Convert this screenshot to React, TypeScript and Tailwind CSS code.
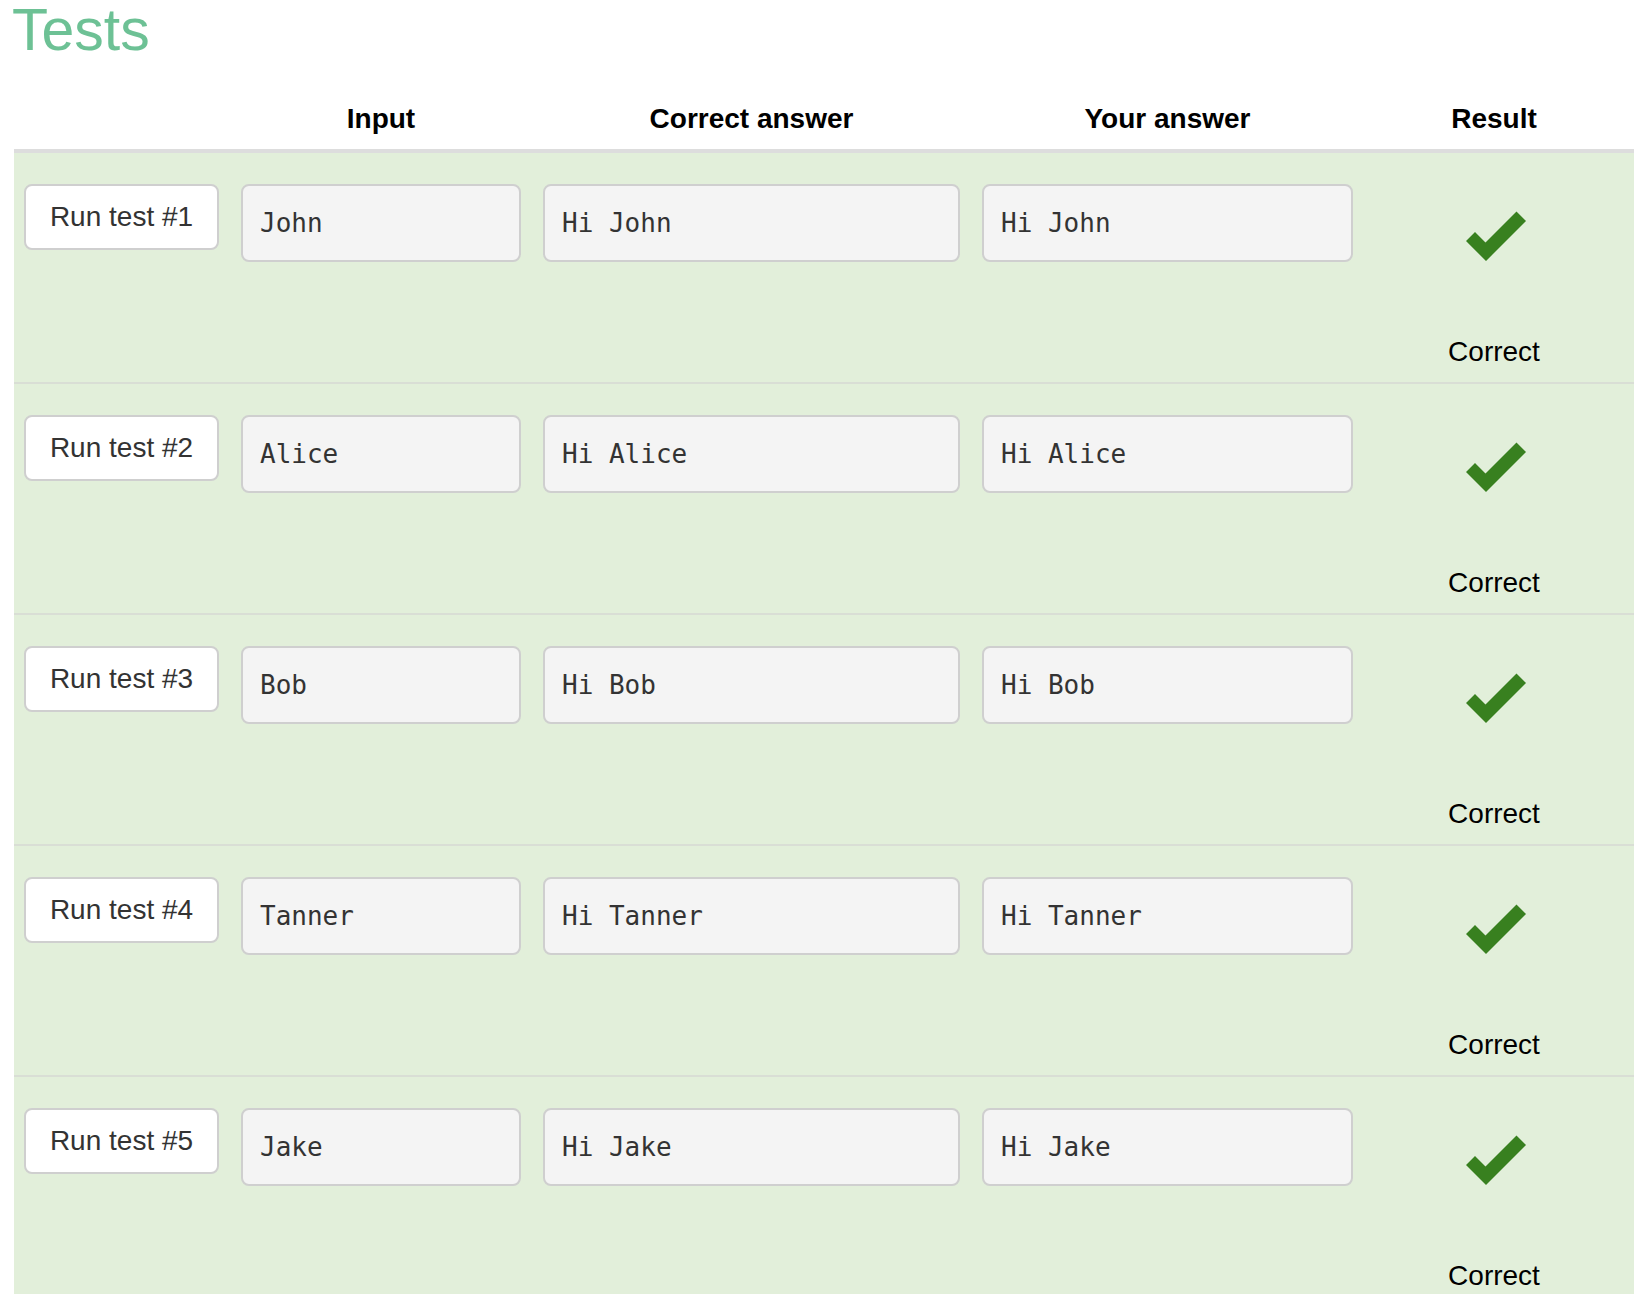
const tests = [
  { input: 'John', expected: 'Hi John', actual: 'Hi John' },
  { input: 'Alice', expected: 'Hi Alice', actual: 'Hi Alice' },
  { input: 'Bob', expected: 'Hi Bob', actual: 'Hi Bob' },
  { input: 'Tanner', expected: 'Hi Tanner', actual: 'Hi Tanner' },
  { input: 'Jake', expected: 'Hi Jake', actual: 'Hi Jake' },
];

const sans = "font-['Liberation_Sans',Arial,sans-serif]";
const mono = "font-['DejaVu_Sans_Mono','Liberation_Mono',monospace]";

function CheckIcon() {
  return (
    <svg width="60" height="50" viewBox="0 0 60 50">
      <polygon points="0,30 9,21 19.5,31.5 50.5,0.5 60,10 20,50" fill="#38801f" />
    </svg>
  );
}

function Field({ value, width }: { value: string; width: string }) {
  return (
    <div
      className={`${width} ${mono} h-[78px] flex items-center pl-[17px] bg-[#f4f4f4] border-2 border-[#cfcfcf] rounded-[8px] text-[26px] text-[#333]`}
    >
      {value}
    </div>
  );
}

function App() {
  return (
    <div className={`${sans} bg-white min-h-screen overflow-hidden`}>
      <h1 className="h-[60px] leading-[60px] pl-[12px] text-[59px] text-[#6dc195] font-normal">Tests</h1>
      <div className="ml-[14px]">
        <div className="flex gap-[22px] pl-[10px] pt-[43px] pb-[14px] border-b-4 border-[#dddddd] text-[28px] leading-[32px] font-bold text-black text-center">
          <div className="w-[195px]"></div>
          <div className="w-[280px]">Input</div>
          <div className="w-[417px]">Correct answer</div>
          <div className="w-[371px]">Your answer</div>
          <div className="w-[238px]">Result</div>
        </div>
        {tests.map((t, i) => (
          <div
            key={i}
            className="flex items-start gap-[22px] pl-[10px] pt-[31px] h-[231px] bg-[#e2efda] border-b-2 border-[#d9ded5]"
          >
            <button className="w-[195px] h-[66px] bg-white border-2 border-[#cfcfcf] rounded-[8px] text-[28px] text-[#333]">
              Run test #{i + 1}
            </button>
            <Field value={t.input} width="w-[280px]" />
            <Field value={t.expected} width="w-[417px]" />
            <Field value={t.actual} width="w-[371px]" />
            <div className="w-[238px] flex flex-col items-center">
              <div className="mt-[27px] ml-[4px]">
                <CheckIcon />
              </div>
              <div className="mt-[75px] text-[28px] leading-[32px] text-black">Correct</div>
            </div>
          </div>
        ))}
      </div>
    </div>
  );
}

export default App;
